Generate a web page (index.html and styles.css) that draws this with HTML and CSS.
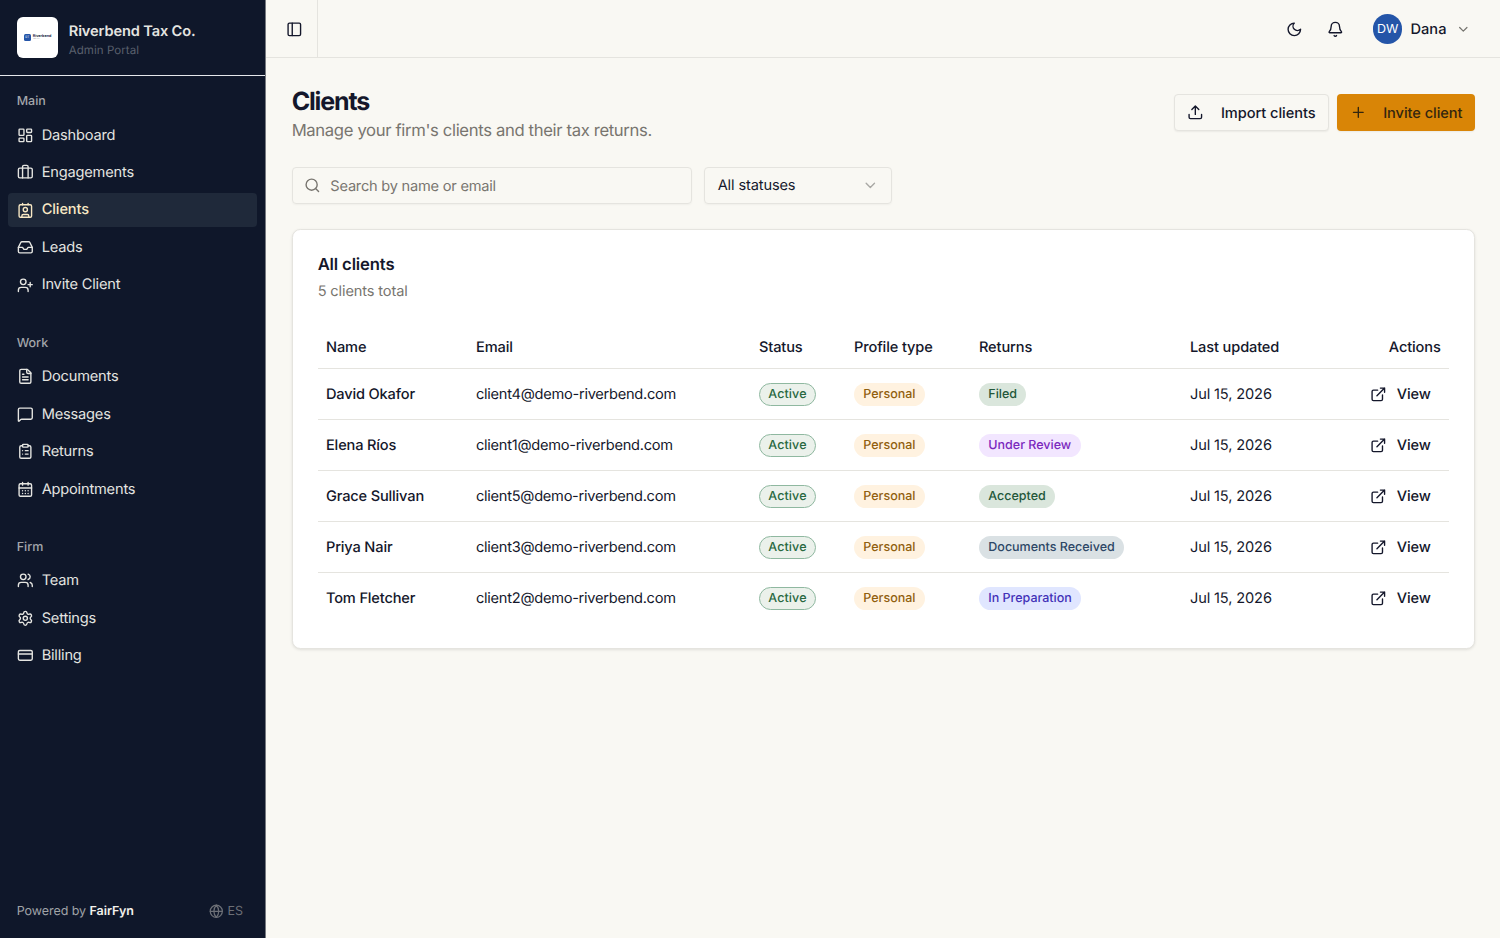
FILE: index.html
```html
<!DOCTYPE html>
<html lang="en">
<head>
<meta charset="UTF-8">
<meta name="viewport" content="width=device-width, initial-scale=1.0">
<title>Clients - Riverbend Tax Co.</title>
<link rel="stylesheet" href="styles.css">
</head>
<body>
<svg class="sprite" xmlns="http://www.w3.org/2000/svg">
  <symbol id="i-dashboard" viewBox="0 0 24 24"><rect width="7" height="9" x="3" y="3" rx="1"/><rect width="7" height="5" x="14" y="3" rx="1"/><rect width="7" height="9" x="14" y="12" rx="1"/><rect width="7" height="5" x="3" y="16" rx="1"/></symbol>
  <symbol id="i-luggage" viewBox="0 0 24 24"><rect width="20" height="14" x="2" y="6" rx="2"/><path d="M16 20V4a2 2 0 0 0-2-2h-4a2 2 0 0 0-2 2v16"/></symbol>
  <symbol id="i-contact" viewBox="0 0 24 24"><path d="M16 2v2M8 2v2M7 22v-2a2 2 0 0 1 2-2h6a2 2 0 0 1 2 2v2"/><circle cx="12" cy="11" r="3"/><rect x="3" y="4" width="18" height="18" rx="2"/></symbol>
  <symbol id="i-inbox" viewBox="0 0 24 24"><path d="M22 12h-6l-2 3h-4l-2-3H2"/><path d="M5.45 5.11 2 12v6a2 2 0 0 0 2 2h16a2 2 0 0 0 2-2v-6l-3.45-6.89A2 2 0 0 0 16.76 4H7.24a2 2 0 0 0-1.79 1.11z"/></symbol>
  <symbol id="i-user-add" viewBox="0 0 24 24"><path d="M16 21v-2a4 4 0 0 0-4-4H6a4 4 0 0 0-4 4v2"/><circle cx="9" cy="7" r="4"/><path d="M19 8v6M22 11h-6"/></symbol>
  <symbol id="i-file" viewBox="0 0 24 24"><path d="M15 2H6a2 2 0 0 0-2 2v16a2 2 0 0 0 2 2h12a2 2 0 0 0 2-2V7Z"/><path d="M14 2v4a2 2 0 0 0 2 2h4M10 9H8M16 13H8M16 17H8"/></symbol>
  <symbol id="i-message" viewBox="0 0 24 24"><path d="M22 17a2 2 0 0 1-2 2H6.828a2 2 0 0 0-1.414.586l-2.202 2.202A.71.71 0 0 1 2 21.286V5a2 2 0 0 1 2-2h16a2 2 0 0 1 2 2z"/></symbol>
  <symbol id="i-clipboard" viewBox="0 0 24 24"><rect width="8" height="4" x="8" y="2" rx="1"/><path d="M16 4h2a2 2 0 0 1 2 2v14a2 2 0 0 1-2 2H6a2 2 0 0 1-2-2V6a2 2 0 0 1 2-2h2M12 11h4M12 16h4M8 11h.01M8 16h.01"/></symbol>
  <symbol id="i-calendar" viewBox="0 0 24 24"><path d="M8 2v4M16 2v4M3 10h18"/><rect width="18" height="18" x="3" y="4" rx="2"/><path d="M8 14h.01M12 14h.01M16 14h.01M8 18h.01M12 18h.01M16 18h.01"/></symbol>
  <symbol id="i-users" viewBox="0 0 24 24"><path d="M16 21v-2a4 4 0 0 0-4-4H6a4 4 0 0 0-4 4v2M16 3.128a4 4 0 0 1 0 7.744M22 21v-2a4 4 0 0 0-3-3.87"/><circle cx="9" cy="7" r="4"/></symbol>
  <symbol id="i-settings" viewBox="0 0 24 24"><path d="M9.671 4.136a2.34 2.34 0 0 1 4.659 0 2.34 2.34 0 0 0 3.319 1.915 2.34 2.34 0 0 1 2.33 4.033 2.34 2.34 0 0 0 0 3.831 2.34 2.34 0 0 1-2.33 4.033 2.34 2.34 0 0 0-3.319 1.915 2.34 2.34 0 0 1-4.659 0 2.34 2.34 0 0 0-3.32-1.915 2.34 2.34 0 0 1-2.33-4.033 2.34 2.34 0 0 0 0-3.831A2.34 2.34 0 0 1 6.35 6.051a2.34 2.34 0 0 0 3.319-1.915"/><circle cx="12" cy="12" r="3"/></symbol>
  <symbol id="i-card" viewBox="0 0 24 24"><rect width="20" height="14" x="2" y="5" rx="2"/><path d="M2 10h20"/></symbol>
  <symbol id="i-globe" viewBox="0 0 24 24"><circle cx="12" cy="12" r="10"/><path d="M12 2a14.5 14.5 0 0 0 0 20 14.5 14.5 0 0 0 0-20M2 12h20"/></symbol>
  <symbol id="i-panel" viewBox="0 0 24 24"><rect width="18" height="18" x="3" y="3" rx="2"/><path d="M9 3v18"/></symbol>
  <symbol id="i-moon" viewBox="0 0 24 24"><path d="M12 3a6 6 0 0 0 9 9 9 9 0 1 1-9-9Z"/></symbol>
  <symbol id="i-bell" viewBox="0 0 24 24"><path d="M10.268 21a2 2 0 0 0 3.464 0M3.262 15.326A1 1 0 0 0 4 17h16a1 1 0 0 0 .74-1.673C19.41 13.956 18 12.499 18 8A6 6 0 0 0 6 8c0 4.499-1.411 5.956-2.738 7.326"/></symbol>
  <symbol id="i-chevron" viewBox="0 0 24 24"><path d="m6 9 6 6 6-6"/></symbol>
  <symbol id="i-upload" viewBox="0 0 24 24"><path d="M12 3v12M17 8l-5-5-5 5M21 15v4a2 2 0 0 1-2 2H5a2 2 0 0 1-2-2v-4"/></symbol>
  <symbol id="i-plus" viewBox="0 0 24 24"><path d="M5 12h14M12 5v14"/></symbol>
  <symbol id="i-search" viewBox="0 0 24 24"><path d="m21 21-4.34-4.34"/><circle cx="11" cy="11" r="8"/></symbol>
  <symbol id="i-external" viewBox="0 0 24 24"><path d="M15 3h6v6M10 14 21 3M18 13v6a2 2 0 0 1-2 2H5a2 2 0 0 1-2-2V8a2 2 0 0 1 2-2h6"/></symbol>
</svg>

<div class="app">
  <aside class="sidebar">
    <div class="brand">
      <div class="brand-logo">
        <span class="logo-mark">RT</span>
        <span class="logo-text"><b>Riverbend</b><i>TAX CO.</i></span>
      </div>
      <div>
        <div class="brand-name">Riverbend Tax Co.</div>
        <div class="brand-sub">Admin Portal</div>
      </div>
    </div>
    <nav class="nav">
      <div class="nav-group">
        <div class="nav-label">Main</div>
        <a class="nav-item"><svg class="icon"><use href="#i-dashboard"/></svg>Dashboard</a>
        <a class="nav-item"><svg class="icon"><use href="#i-luggage"/></svg>Engagements</a>
        <a class="nav-item active"><svg class="icon"><use href="#i-contact"/></svg>Clients</a>
        <a class="nav-item"><svg class="icon"><use href="#i-inbox"/></svg>Leads</a>
        <a class="nav-item"><svg class="icon"><use href="#i-user-add"/></svg>Invite Client</a>
      </div>
      <div class="nav-group">
        <div class="nav-label">Work</div>
        <a class="nav-item"><svg class="icon"><use href="#i-file"/></svg>Documents</a>
        <a class="nav-item"><svg class="icon"><use href="#i-message"/></svg>Messages</a>
        <a class="nav-item"><svg class="icon"><use href="#i-clipboard"/></svg>Returns</a>
        <a class="nav-item"><svg class="icon"><use href="#i-calendar"/></svg>Appointments</a>
      </div>
      <div class="nav-group">
        <div class="nav-label">Firm</div>
        <a class="nav-item"><svg class="icon"><use href="#i-users"/></svg>Team</a>
        <a class="nav-item"><svg class="icon"><use href="#i-settings"/></svg>Settings</a>
        <a class="nav-item"><svg class="icon"><use href="#i-card"/></svg>Billing</a>
      </div>
    </nav>
    <div class="sidebar-footer">
      <span>Powered by <strong>FairFyn</strong></span>
      <span class="lang"><svg class="icon"><use href="#i-globe"/></svg>ES</span>
    </div>
  </aside>

  <div class="page">
    <header class="topbar">
      <div class="toggle"><svg class="icon"><use href="#i-panel"/></svg></div>
      <div class="topbar-right">
        <svg class="icon"><use href="#i-moon"/></svg>
        <svg class="icon"><use href="#i-bell"/></svg>
        <div class="user">
          <span class="avatar">DW</span>
          <span class="user-name">Dana</span>
          <svg class="icon chevron"><use href="#i-chevron"/></svg>
        </div>
      </div>
    </header>

    <main class="content">
      <div class="page-head">
        <div>
          <h1>Clients</h1>
          <p>Manage your firm's clients and their tax returns.</p>
        </div>
        <div class="actions">
          <button class="btn"><svg class="icon"><use href="#i-upload"/></svg><span>Import clients</span></button>
          <button class="btn btn-primary"><svg class="icon"><use href="#i-plus"/></svg><span>Invite client</span></button>
        </div>
      </div>

      <div class="filters">
        <div class="search"><svg class="icon"><use href="#i-search"/></svg><span>Search by name or email</span></div>
        <div class="select"><span>All statuses</span><svg class="icon"><use href="#i-chevron"/></svg></div>
      </div>

      <section class="card">
        <h2>All clients</h2>
        <p class="card-sub">5 clients total</p>
        <table>
          <thead>
            <tr>
              <th class="col-name">Name</th>
              <th class="col-email">Email</th>
              <th class="col-status">Status</th>
              <th class="col-type">Profile type</th>
              <th class="col-returns">Returns</th>
              <th class="col-updated">Last updated</th>
              <th class="col-actions">Actions</th>
            </tr>
          </thead>
          <tbody>
            <tr>
              <td class="name">David Okafor</td>
              <td class="email">client4@demo-riverbend.com</td>
              <td><span class="badge active-badge">Active</span></td>
              <td><span class="badge personal">Personal</span></td>
              <td><span class="badge green">Filed</span></td>
              <td>Jul 15, 2026</td>
              <td><a class="view"><svg class="icon"><use href="#i-external"/></svg>View</a></td>
            </tr>
            <tr>
              <td class="name">Elena Ríos</td>
              <td class="email">client1@demo-riverbend.com</td>
              <td><span class="badge active-badge">Active</span></td>
              <td><span class="badge personal">Personal</span></td>
              <td><span class="badge purple">Under Review</span></td>
              <td>Jul 15, 2026</td>
              <td><a class="view"><svg class="icon"><use href="#i-external"/></svg>View</a></td>
            </tr>
            <tr>
              <td class="name">Grace Sullivan</td>
              <td class="email">client5@demo-riverbend.com</td>
              <td><span class="badge active-badge">Active</span></td>
              <td><span class="badge personal">Personal</span></td>
              <td><span class="badge green">Accepted</span></td>
              <td>Jul 15, 2026</td>
              <td><a class="view"><svg class="icon"><use href="#i-external"/></svg>View</a></td>
            </tr>
            <tr>
              <td class="name">Priya Nair</td>
              <td class="email">client3@demo-riverbend.com</td>
              <td><span class="badge active-badge">Active</span></td>
              <td><span class="badge personal">Personal</span></td>
              <td><span class="badge slate">Documents Received</span></td>
              <td>Jul 15, 2026</td>
              <td><a class="view"><svg class="icon"><use href="#i-external"/></svg>View</a></td>
            </tr>
            <tr>
              <td class="name">Tom Fletcher</td>
              <td class="email">client2@demo-riverbend.com</td>
              <td><span class="badge active-badge">Active</span></td>
              <td><span class="badge personal">Personal</span></td>
              <td><span class="badge indigo">In Preparation</span></td>
              <td>Jul 15, 2026</td>
              <td><a class="view"><svg class="icon"><use href="#i-external"/></svg>View</a></td>
            </tr>
          </tbody>
        </table>
      </section>
    </main>
  </div>
</div>
</body>
</html>
```
FILE: styles.css
```css
* {
  box-sizing: border-box;
}
body {
  margin: 0;
  font-family: Inter, "Liberation Sans", sans-serif;
  font-size: 14.6px;
  line-height: 21px;
  letter-spacing: -0.13px;
  text-rendering: geometricPrecision;
  color: #14172b;
  background-color: #f9f8f3;
}
h1, h2, p {
  margin: 0;
}
.sprite {
  display: none;
}
.icon {
  width: 16.67px;
  height: 16.67px;
  flex-shrink: 0;
  fill: none;
  stroke: currentColor;
  stroke-width: 2;
  stroke-linecap: round;
  stroke-linejoin: round;
}
.app {
  display: flex;
  height: 100vh;
}

/* Sidebar */
.sidebar {
  width: 266px;
  flex-shrink: 0;
  display: flex;
  flex-direction: column;
  background-color: #0f172a;
  color: #e5e5e1;
  border-right: 1px solid #777a80;
}
.brand {
  display: flex;
  align-items: center;
  gap: 10.4px;
  height: 76px;
  padding: 0 16.7px;
  border-bottom: 1px solid #e5e7eb;
}
.brand-logo {
  width: 41.7px;
  height: 41.7px;
  display: flex;
  align-items: center;
  justify-content: center;
  gap: 2px;
  border-radius: 6px;
  background-color: #fff;
}
.logo-mark {
  width: 7px;
  height: 7px;
  border-radius: 1.5px;
  background-color: #2455a8;
  color: #fff;
  font-size: 3px;
  line-height: 7px;
  letter-spacing: 0;
  text-align: center;
}
.logo-text {
  display: flex;
  flex-direction: column;
  letter-spacing: 0;
  color: #1c2b4a;
}
.logo-text b {
  font-size: 3.7px;
  line-height: 4px;
}
.logo-text i {
  font-size: 1.8px;
  line-height: 2.5px;
  font-style: normal;
  color: #777f8d;
}
.brand-name {
  font-size: 14.6px;
  line-height: 18px;
  font-weight: 600;
  margin-top: 5px;
}
.brand-sub {
  font-size: 11.5px;
  line-height: 17px;
  margin-top: 2px;
  letter-spacing: 0.05px;
  color: #5a606d;
}
.nav {
  flex: 1;
  display: flex;
  flex-direction: column;
  gap: 8.33px;
  padding-top: 0.7px;
}
.nav-group {
  display: flex;
  flex-direction: column;
  gap: 4.17px;
  padding: 8.33px;
}
.nav-label {
  height: 33.33px;
  margin-bottom: -4.17px;
  padding: 0 8.33px;
  font-size: 12.5px;
  line-height: 33.33px;
  font-weight: 500;
  letter-spacing: 0;
  color: #a3a6aa;
}
.nav-item {
  display: flex;
  align-items: center;
  gap: 8.33px;
  height: 33.33px;
  padding: 0 8.33px;
  border-radius: 4px;
  letter-spacing: -0.18px;
}
.nav-item.active {
  background-color: #1f293a;
  color: #f8e8c4;
  font-weight: 500;
  letter-spacing: -0.1px;
}
.sidebar-footer {
  display: flex;
  align-items: center;
  justify-content: space-between;
  height: 54px;
  padding: 1px 22px 0 16.7px;
  font-size: 12.5px;
  letter-spacing: -0.05px;
  color: #a0a3a7;
}
.sidebar-footer strong {
  font-weight: 600;
  color: #f3f2ed;
}
.lang {
  display: flex;
  align-items: center;
  gap: 4px;
  color: #6c6f76;
}
.lang .icon {
  width: 14.6px;
  height: 14.6px;
}

/* Top bar */
.page {
  flex: 1;
  min-width: 0;
}
.topbar {
  display: flex;
  justify-content: space-between;
  height: 58px;
  border-bottom: 1px solid #e5e4df;
}
.toggle {
  width: 52px;
  display: flex;
  align-items: center;
  padding-left: 19.5px;
  padding-top: 1px;
  border-right: 1px solid #e5e4df;
}
.topbar-right {
  display: flex;
  align-items: center;
  gap: 25px;
  padding-top: 1px;
  padding-right: 29.6px;
}
.user {
  display: flex;
  align-items: center;
  gap: 8.4px;
  margin-left: 4px;
}
.avatar {
  width: 29.2px;
  height: 29.2px;
  border-radius: 50%;
  background-color: #2455a8;
  color: #fff;
  font-size: 12.5px;
  line-height: 31.2px;
  text-align: center;
}
.user-name {
  font-weight: 500;
  letter-spacing: 0;
}
.user .chevron {
  width: 14.6px;
  height: 14.6px;
  margin-left: 1px;
  color: #76756f;
}

/* Page content */
.content {
  padding: 25px 25px 0 25.67px;
}
.page-head {
  display: flex;
  justify-content: space-between;
  align-items: center;
  height: 59px;
}
h1 {
  font-size: 25px;
  line-height: 35px;
  font-weight: 700;
  letter-spacing: -1.15px;
  margin-top: 3px;
}
.page-head p {
  font-size: 16.67px;
  line-height: 24px;
  letter-spacing: -0.35px;
  margin-top: -1px;
  color: #78756f;
}
.actions {
  display: flex;
  gap: 8.33px;
}
.btn {
  display: flex;
  align-items: center;
  gap: 17px;
  height: 37.5px;
  padding: 0 12.5px;
  border: 1px solid #e5e4df;
  border-radius: 4px;
  background-color: #f9f8f3;
  color: inherit;
  font: inherit;
  font-weight: 500;
  letter-spacing: -0.05px;
  text-rendering: inherit;
  box-shadow: 0 1px 2px rgba(0, 0, 0, 0.06);
}
.btn span {
  padding-top: 1px;
}
.btn-primary {
  gap: 16.67px;
  border: none;
  background-color: #d98506;
  color: #33260f;
}
.filters {
  display: flex;
  gap: 12.5px;
  margin-top: 24.5px;
}
.search,
.select {
  display: flex;
  align-items: center;
  height: 37.5px;
  padding: 0 12.5px;
  border: 1px solid #e5e4df;
  border-radius: 4px;
  box-shadow: 0 1px 2px rgba(0, 0, 0, 0.04);
}
.search {
  width: 400px;
  gap: 9.5px;
  padding-left: 11.5px;
  letter-spacing: -0.22px;
  color: #78756f;
}
.search span {
  padding-top: 3px;
}
.select {
  width: 187.5px;
  justify-content: space-between;
}
.select span {
  padding-top: 1px;
}
.select .icon {
  color: #aaa9a5;
}
.card {
  height: 420px;
  margin-top: 25px;
  padding: 26px 25px 25px;
  border: 1px solid #e5e4df;
  border-radius: 8.33px;
  background-color: #fff;
  box-shadow: 0 1px 3px rgba(0, 0, 0, 0.1);
}
h2 {
  font-size: 16.67px;
  line-height: 18px;
  font-weight: 600;
  letter-spacing: -0.15px;
}
.card-sub {
  margin-top: 7px;
  color: #78756f;
}

/* Clients table */
table {
  width: 100%;
  margin-top: 24.5px;
  table-layout: fixed;
  border-collapse: collapse;
}
th, td {
  padding: 0 8.33px;
  text-align: left;
  white-space: nowrap;
}
th {
  height: 42px;
  font-weight: 500;
}
td {
  height: 51px;
}
tr {
  border-bottom: 1px solid #e5e4df;
}
tbody tr:last-child {
  border-bottom: none;
}
.col-name {
  width: 150px;
}
.col-email {
  width: 283px;
}
.col-status {
  width: 95px;
}
.col-type {
  width: 125px;
}
.col-returns {
  width: 211px;
}
.col-updated {
  width: 166px;
}
.col-actions {
  text-align: right;
}
.name {
  font-weight: 500;
  letter-spacing: -0.16px;
}
.email {
  letter-spacing: -0.26px;
}
.badge {
  display: block;
  width: fit-content;
  padding: 0 8.33px;
  border: 1px solid transparent;
  border-radius: 12px;
  font-size: 12.5px;
  line-height: 21px;
  font-weight: 500;
  letter-spacing: 0;
}
.active-badge {
  letter-spacing: 0.1px;
  border-color: #8fb8a0;
  background-color: #ebf1eb;
  color: #28683f;
}
.personal {
  background-color: #fff2e0;
  color: #91600f;
}
.green {
  background-color: #dae6dc;
  color: #23573a;
}
.purple {
  background-color: #f2e6ff;
  color: #7a28bd;
}
.slate {
  background-color: #dae1e4;
  color: #2d4766;
}
.indigo {
  background-color: #e0e6ff;
  color: #4332b8;
}
.view {
  display: flex;
  align-items: center;
  justify-content: flex-end;
  gap: 10.5px;
  padding-right: 10px;
  font-weight: 500;
}
```
